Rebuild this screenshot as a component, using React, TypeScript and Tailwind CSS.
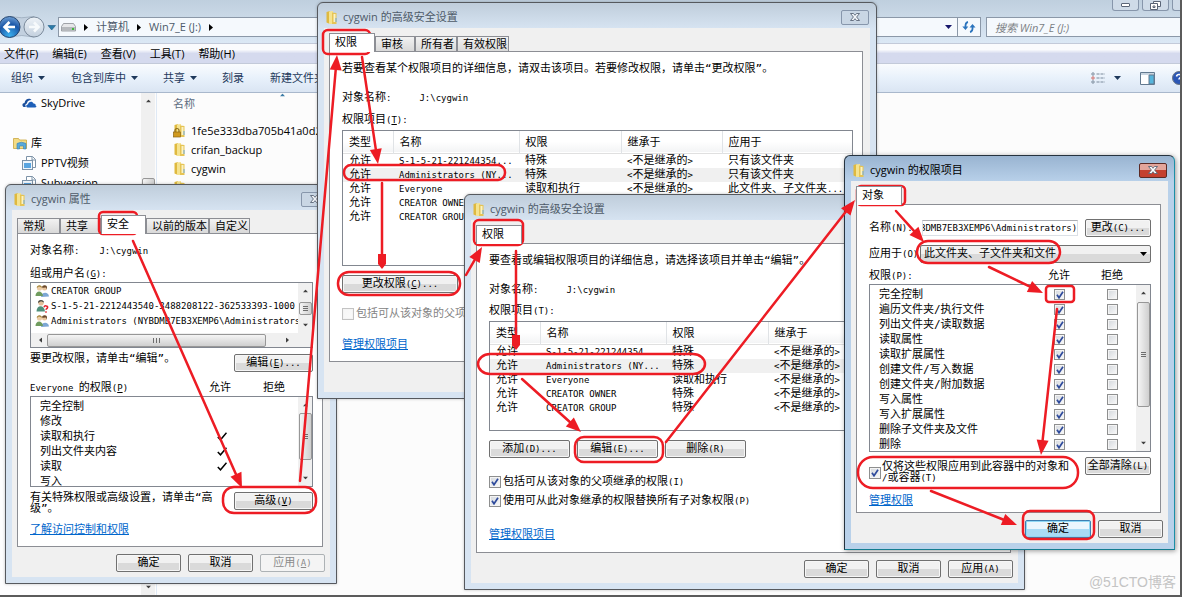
import React from 'react';
import { clsx } from 'clsx';

const UI_FONT = "font-['Open_Sans','Noto_Sans_CJK_SC',sans-serif]";
const DIALOG_FONT = "font-['DejaVu_Sans_Mono','Noto_Sans_CJK_SC',monospace]";
const RED = '#ed1c24';

// Splits a label into CJK and latin runs. "&" marks the accelerator key, as in Win32 resources.
const T = ({ text }: { text: string }) => {
  const runs = text.match(/[\x20-\x7e]+|[^\x20-\x7e]+/g) ?? [];
  return (
    <>
      {runs.map((run, i) => {
        if (run.charCodeAt(0) > 0x7e) return <React.Fragment key={i}>{run}</React.Fragment>;
        const at = run.indexOf('&');
        return (
          <span key={i} className="text-[9px] whitespace-pre">
            {at < 0 ? run : <>{run.slice(0, at)}<u>{run[at + 1]}</u>{run.slice(at + 2)}</>}
          </span>
        );
      })}
    </>
  );
};

/* ---------- icons ---------- */

const FolderIcon = ({ locked = false }: { locked?: boolean }) => (
  <svg width="14" height="15" viewBox="0 0 14 15" className="shrink-0">
    <path d="M1.500 2 5 1v13l-3.500-1.500z" fill="#dfb93f" />
    <path d="M4 1.500 8 1v13H4z" fill="#f5e38f" />
    <path d="M7 2.500 11.500 3v11H7z" fill="#e6c455" />
    <path d="M8.500 4h2v8h-2z" fill="#fbf3c4" />
    <path d="M10.500 8h1v4h-1z" fill="#6fa8d6" />
    {locked && (
      <>
        <path d="M2 9V7.500a2 2 0 0 1 4 0V9" fill="none" stroke="#8a6a1c" strokeWidth="1.200" />
        <rect x="0.500" y="9" width="7" height="5" fill="#d19a1f" stroke="#8a6412" strokeWidth="0.700" />
      </>
    )}
  </svg>
);

const CloudIcon = () => (
  <svg width="15" height="10" viewBox="0 0 15 10" className="shrink-0">
    <path d="M1.500 9C-.5 7.500.5 5 2.500 5 3 1 7.500-.5 9.500 2 6.500 2 5 3.500 5 5.500 3 6 3 8 4 9z" fill="#1b4f9c" />
    <path d="M5.500 9.500C3.500 9 4 6.500 6 6.500c0-3 4.500-4 5.500-1 2 0 2.500 1.500 2 2C15 8 14.500 9.500 13 9.500z" fill="#1d5fb8" />
  </svg>
);

const LibraryIcon = () => (
  <svg width="15" height="13" viewBox="0 0 15 13" className="shrink-0">
    <path d="M.5 1.500h5l1 1.500h7v8.500H.5z" fill="#f3dc86" stroke="#c9a740" strokeWidth="0.800" />
    <path d="M4 12V6.500Q8.500 4 13 6.500V12h-2.500V9h-4v3z" fill="#59aadb" stroke="#3a80b4" strokeWidth="0.600" />
  </svg>
);

const DocLibraryIcon = () => (
  <svg width="14" height="15" viewBox="0 0 14 15" className="shrink-0">
    <path d="M4.500.5h6l3 3v8h-9z" fill="#fff" stroke="#7d93a8" />
    <path d="M10 .5V4h3.500" fill="none" stroke="#7d93a8" />
    <rect x="0.500" y="4.500" width="10" height="9" fill="#eef5fb" stroke="#7d93a8" />
    <rect x="2" y="7" width="7" height="5" fill="#5aa5e0" />
  </svg>
);

const DriveIcon = () => (
  <svg width="15" height="9" viewBox="0 0 15 9" className="shrink-0">
    <path d="M2.500.5h10l2 3v4.500H.5V3.500z" fill="#e6e7e9" stroke="#8b8f94" strokeWidth="0.800" />
    <path d="M1 4h13v4H1z" fill="#b6b9bd" />
    <rect x="11" y="5" width="2" height="2" fill="#3fba3a" />
  </svg>
);

const GroupIcon = () => (
  <svg width="14" height="14" viewBox="0 0 14 14" className="shrink-0">
    <circle cx="9.500" cy="4" r="2.500" fill="#e8c49c" />
    <path d="M7 3.500C7 1 12 0 12 3.500v2l-1-2-3 .2z" fill="#6a4a2c" />
    <path d="M6 13c0-5 7.500-6 8-.5z" fill="#7da7d4" />
    <circle cx="4.500" cy="4" r="2.600" fill="#edcda6" />
    <path d="M1.800 4C1.500.5 7 .3 7 3.800L4 2.600z" fill="#a5883f" />
    <path d="M.5 12c0-6 7-6 7.500 0z" fill="#6f9c5e" />
  </svg>
);

const UnknownUserIcon = () => (
  <svg width="14" height="14" viewBox="0 0 14 14" className="shrink-0">
    <circle cx="6" cy="3.800" r="2.800" fill="#e3c09a" />
    <path d="M3 4C2.500 0 9 0 9 3.500L6 2.300z" fill="#4c4c48" />
    <path d="M1.500 12.500c0-7 8-7 8.500 0z" fill="#4f8f7a" />
    <path d="M9 8.200c.5-2 4-1.600 3.600.3-.2 1-1.500 1.200-1.600 2.300M11 12.200v1.500" fill="none" stroke="#e3202a" strokeWidth="1.500" />
  </svg>
);

const Down = ({ className = 'text-[#1e395b]' }: { className?: string }) => (
  <svg width="7" height="4" viewBox="0 0 7 4" className={clsx('shrink-0', className)}>
    <path d="M0 0h7L3.500 4z" fill="currentColor" />
  </svg>
);

const CrumbArrow = () => (
  <svg width="4" height="7" viewBox="0 0 4 7" className="mx-[8px] shrink-0">
    <path d="M0 0v7l4-3.500z" fill="#000" />
  </svg>
);

const CloseGlyph = ({ fill }: { fill: string }) => (
  <svg width="10" height="8" viewBox="0 0 10 8">
    <path d="M.5.5h3L5 2.300 6.500.5h3L6.600 4l2.900 3.500h-3L5 5.700 3.500 7.500h-3L3.400 4z" fill={fill} stroke="#5a6577" strokeWidth="0.900" />
  </svg>
);

/* ---------- controls ---------- */

interface BtnProps {
  text: string;
  className?: string;
  disabled?: boolean;
  primary?: boolean;
}

const Btn = ({ text, className, disabled, primary }: BtnProps) => (
  <button
    type="button"
    disabled={disabled}
    className={clsx(
      'flex h-[18px] items-center justify-center rounded-[2px] border whitespace-nowrap',
      disabled && 'border-[#adb2b5] bg-[#f4f4f4] text-[#8a8a8a]',
      primary && 'border-[#3c7fb1] bg-linear-to-b from-[#eaf6fd] from-50% to-[#a9dbf5] to-50% shadow-[inset_0_0_0_1px_#8fd8f5]',
      !disabled && !primary && 'border-[#707070] bg-linear-to-b from-[#f1f1f1] from-50% to-[#dadada] to-50% shadow-[inset_0_0_0_1px_#f6f6f6]',
      className,
    )}
  >
    <span><T text={text} /></span>
  </button>
);

interface CheckProps {
  checked?: boolean;
  disabled?: boolean;
  small?: boolean;
  id?: string;
  label?: string;
}

const Check = ({ checked, disabled, small, id, label }: CheckProps) => (
  <span className="grid shrink-0 place-items-center">
    <input
      type="checkbox"
      id={id}
      aria-label={label}
      defaultChecked={checked}
      disabled={disabled}
      className={clsx(
        'peer col-start-1 row-start-1 appearance-none border border-[#8e8f8f] bg-linear-to-br from-[#d3d7dc] to-[#fafafa] shadow-[inset_0_0_0_1px_#f4f4f4] disabled:border-[#c3c3c3] disabled:from-[#f6f6f6]',
        small ? 'size-[11px]' : 'size-[12px]',
      )}
    />
    <svg width="8" height="8" viewBox="0 0 8 8" className="pointer-events-none invisible col-start-1 row-start-1 peer-checked:visible">
      <path d="M1 3.800 3 6.800 7 .8" fill="none" stroke="#2f4b9c" strokeWidth="1.700" />
    </svg>
  </span>
);

const VScroll = ({ before, thumb }: { before: string; thumb: string }) => (
  <div className="flex w-[14px] shrink-0 flex-col items-center bg-[#f0f0f0] py-[6px]">
    <Down className="rotate-180 scale-75 text-[#404040]" />
    <div className={before} />
    <div className={clsx('flex w-[13px] flex-col items-center justify-center gap-[1px] rounded-[2px] border border-[#979797] bg-linear-to-r from-[#f5f5f5] to-[#cfcfcf]', thumb)}>
      <i className="h-px w-[5px] bg-[#6d6d6d]" />
      <i className="h-px w-[5px] bg-[#6d6d6d]" />
      <i className="h-px w-[5px] bg-[#6d6d6d]" />
    </div>
    <div className="flex-1" />
    <Down className="scale-75 text-[#404040]" />
  </div>
);

interface Tab {
  name: string;
  width: string;
}

interface DialogProps {
  title: string;
  place: string;
  tabs: Tab[];
  current: string;
  active?: boolean;
  footer?: React.ReactNode;
  children: React.ReactNode;
}

const Dialog = ({ title, place, tabs, current, active, footer, children }: DialogProps) => (
  <section
    className={clsx(
      'absolute flex flex-col rounded-t-[6px] border px-[6px] pb-[6px] text-[11px] leading-[16px] text-black',
      DIALOG_FONT,
      active
        ? 'border-[#26333f] border-r-[#1b8fa6] border-b-[#127c8f] bg-[#b9d1ea] bg-linear-to-b from-[#99b4d1] to-[#b9d1ea] to-[26px] shadow-[1px_1px_5px_rgba(0,0,0,0.4)]'
        : 'border-[#56595e] bg-[#d7e4f2] bg-linear-to-b from-[#bfcddb] to-[#d7e4f2] to-[26px] shadow-[0_0_3px_rgba(0,0,0,0.25)]',
      place,
    )}
  >
    <header className={clsx('flex h-[25px] shrink-0 items-center gap-[4px] pt-[3px] pl-px', UI_FONT, active ? 'text-black' : 'text-[#4e5a68]')}>
      <FolderIcon />
      <h2 className="flex-1 whitespace-nowrap">{title}</h2>
      <button
        type="button"
        aria-label="关闭"
        className={clsx(
          'mr-px flex h-[15px] w-[28px] items-center justify-center rounded-[2px] border',
          active ? 'border-[#5c2a25] bg-linear-to-b from-[#e3a59b] from-45% to-[#c4402f] to-50%' : 'border-[#8796ab] bg-[#c9d6e4]',
        )}
      >
        <CloseGlyph fill={active ? '#fff' : '#f3f6fa'} />
      </button>
    </header>
    <div className="flex min-h-0 flex-1 flex-col bg-[#f0f0f0] px-[5px] pt-[5px]">
      <div className="flex h-[18px] shrink-0 items-end" role="tablist">
        {tabs.map((tab) => (
          <button
            key={tab.name}
            type="button"
            role="tab"
            aria-selected={tab.name === current}
            className={clsx(
              'border border-b-0 border-[#8c8e94] pl-[5px] text-left whitespace-nowrap',
              tab.name === current ? 'z-10 -mb-px h-[19px] bg-white' : 'h-[15px] bg-linear-to-b from-[#f2f2f2] to-[#d9d9d9]',
              tab.width,
            )}
          >
            {tab.name}
          </button>
        ))}
      </div>
      <div className="mr-[2px] flex min-h-0 flex-1 flex-col border border-[#8c8e94] bg-white pr-[9px] pl-[12px]">{children}</div>
      <div className="flex h-[30px] shrink-0 justify-end gap-[7px] pt-[7px]">{footer}</div>
    </div>
  </section>
);

const DialogLink = ({ text, className }: { text: string; className: string }) => (
  <a href="#" className={clsx('self-start text-[#0066cc] underline', className)}>{text}</a>
);

/* ---------- data ---------- */

const ENTRIES = [
  ['允许', 'S-1-5-21-221244354...', '特殊', '<不是继承的>', '只有该文件夹'],
  ['允许', 'Administrators (NY...', '特殊', '<不是继承的>', '只有该文件夹'],
  ['允许', 'Everyone', '读取和执行', '<不是继承的>', '此文件夹、子文件夹...'],
  ['允许', 'CREATOR OWNER', '特殊', '<不是继承的>', '只有子文件夹和文件'],
  ['允许', 'CREATOR GROUP', '特殊', '<不是继承的>', '只有子文件夹和文件'],
];

const BASIC_RIGHTS = [
  { name: '完全控制', allow: false },
  { name: '修改', allow: false },
  { name: '读取和执行', allow: true },
  { name: '列出文件夹内容', allow: true },
  { name: '读取', allow: true },
  { name: '写入', allow: false },
];

const SPECIAL_RIGHTS = [
  '完全控制',
  '遍历文件夹/执行文件',
  '列出文件夹/读取数据',
  '读取属性',
  '读取扩展属性',
  '创建文件/写入数据',
  '创建文件夹/附加数据',
  '写入属性',
  '写入扩展属性',
  '删除子文件夹及文件',
  '删除',
];

const EntryTable = ({ height }: { height: string }) => (
  <div className={clsx('shrink-0 overflow-hidden border border-[#828790] bg-white', height)}>
    <table className="w-full table-fixed border-collapse text-left whitespace-nowrap">
      <thead>
        <tr className="h-[22px] border-b border-[#e0e0e0] bg-linear-to-b from-white from-50% to-[#f3f4f5]">
          <th className="w-[50px] border-r border-[#e0e3e6] p-0 pt-[2px] pl-[6px] font-normal">类型</th>
          <th className="w-[126px] border-r border-[#e0e3e6] p-0 pt-[2px] pl-[6px] font-normal">名称</th>
          <th className="w-[102px] border-r border-[#e0e3e6] p-0 pt-[2px] pl-[6px] font-normal">权限</th>
          <th className="w-[101px] border-r border-[#e0e3e6] p-0 pt-[2px] pl-[6px] font-normal">继承于</th>
          <th className="p-0 pt-[2px] pl-[6px] font-normal">应用于</th>
        </tr>
      </thead>
      <tbody>
        {ENTRIES.map((row, r) => (
          <tr key={row[1]} className={clsx('h-[14px] leading-[14px]', r === 1 && 'bg-[#f0f0f0]')}>
            {row.map((cell, c) => (
              <td key={c} className="overflow-hidden p-0 pl-[6px]"><T text={cell} /></td>
            ))}
          </tr>
        ))}
      </tbody>
    </table>
  </div>
);

/* ---------- explorer ---------- */

const Explorer = () => (
  <main className={clsx('mr-[2px] mb-[2px] flex min-h-0 flex-1 flex-col border-r-2 border-b-2 border-[#5b5b5b] bg-[#fcfcfc] text-[11px] leading-[16px]', UI_FONT)}>
    <div className="flex h-[43px] shrink-0 flex-col bg-linear-to-b from-[#bfcfde] to-[#dbe8f5]">
      <div className="flex h-[17px] justify-end gap-[3px]">
        <button type="button" aria-label="最小化" className="flex h-[11px] w-[27px] items-center justify-center rounded-b-[3px] border border-t-0 border-[#8796ab] bg-[#cfdbe8]">
          <i className="h-[4px] w-[9px] rounded-[1px] border border-[#5a6577] bg-white" />
        </button>
        <button type="button" aria-label="还原" className="flex h-[11px] w-[27px] items-center justify-center rounded-b-[3px] border border-t-0 border-[#8796ab] bg-[#cfdbe8]">
          <svg width="11" height="9" viewBox="0 0 11 9" fill="#fff" stroke="#5a6577">
            <path d="M3.500.5h7v5h-7z" />
            <path d="M.5 2.500h7v6h-7zM3 5h2v1.500H3z" />
          </svg>
        </button>
        <button type="button" aria-label="关闭" className="h-[11px] w-[8px] rounded-bl-[3px] border border-t-0 border-r-0 border-[#8796ab] bg-[#cfdbe8]" />
      </div>
      <div className="flex h-[20px] items-center">
        <svg width="58" height="24" viewBox="0 0 58 24" className="shrink-0">
          <defs>
            <radialGradient id="back" cx="0.500" cy="0.900" r="0.900">
              <stop offset="0" stopColor="#39b0ef" />
              <stop offset="0.600" stopColor="#1b58a8" />
              <stop offset="1" stopColor="#6f9fd4" />
            </radialGradient>
            <linearGradient id="fwd" x1="0" y1="0" x2="0" y2="1">
              <stop offset="0" stopColor="#eef3f8" />
              <stop offset="1" stopColor="#c3d0de" />
            </linearGradient>
          </defs>
          <path d="M9 1.500Q22 4 34 1.500V22Q22 19 9 22z" fill="#c2d0df" stroke="#94a3b4" strokeWidth="0.700" />
          <circle cx="9.500" cy="12" r="10.500" fill="url(#back)" stroke="#24456f" />
          <path d="M15 12H5M9.500 7 4.500 12l5 5" fill="none" stroke="#fff" strokeWidth="2.600" />
          <circle cx="34" cy="12" r="10" fill="url(#fwd)" stroke="#7c8b9c" />
          <path d="M29 12h9M34 7.500l4.500 4.500-4.500 4.500" fill="none" stroke="#f7fafc" strokeWidth="2.600" />
          <path d="M48 10.500h7.500L51.700 15z" fill="#2b7ba8" stroke="#1f5c85" strokeWidth="0.600" />
        </svg>
        <nav className="flex h-[20px] flex-1 items-center border border-[#8b98a8] bg-[#f5f9fd] pl-[2px] text-[#4d5b6b]">
          <DriveIcon />
          <CrumbArrow />
          <a href="#">计算机</a>
          <CrumbArrow />
          <a href="#">Win7_E (J:)</a>
          <CrumbArrow />
          <span className="flex-1" />
          <Down className="mr-[5px] text-[#16166b]" />
        </nav>
        <button type="button" aria-label="刷新" className="flex h-[20px] w-[23px] items-center justify-center border border-l-0 border-[#8b98a8] bg-[#f5f9fd]">
          <svg width="14" height="12" viewBox="0 0 14 12" fill="none" stroke="#2b74bd" strokeWidth="1.800">
            <path d="M6 1Q3 1.500 3.500 7M8 11Q11 10.500 10.500 5.500" />
            <path d="M.3 5.500h6L3.500 9zM7.500 6.500h6L10.500 3z" fill="#2b74bd" stroke="none" />
          </svg>
        </button>
        <input
          type="search"
          aria-label="搜索"
          placeholder="搜索 Win7_E (J:)"
          className="ml-[5px] h-[20px] w-[194px] border border-r-0 border-[#8b98a8] bg-[#f5f9fd] pl-[8px] italic placeholder:text-[#7b7f84]"
        />
      </div>
    </div>

    <div className="flex h-[21px] shrink-0 items-center gap-[14px] border-y border-[#c3cad9] bg-linear-to-b from-[#fafbfd] from-30% to-[#d5daee] to-50% pl-[4px]">
      {['文件(F)', '编辑(E)', '查看(V)', '工具(T)', '帮助(H)'].map((item) => (
        <button key={item} type="button" className="whitespace-nowrap">{item}</button>
      ))}
    </div>

    <div className="flex h-[29px] shrink-0 items-center border-b border-[#a9b8cc] bg-linear-to-b from-[#fafcfe] via-[#e8f1fb] via-50% to-[#dae5f3] pl-[11px] text-[#1e395b]">
      <button type="button" className="flex w-[60px] items-center gap-[5px] whitespace-nowrap">组织<Down /></button>
      <button type="button" className="flex w-[92px] items-center gap-[5px] whitespace-nowrap">包含到库中<Down /></button>
      <button type="button" className="flex w-[59px] items-center gap-[5px] whitespace-nowrap">共享<Down /></button>
      <button type="button" className="w-[48px] text-left whitespace-nowrap">刻录</button>
      <button type="button" className="whitespace-nowrap">新建文件夹</button>
      <span className="flex-1" />
      <button type="button" aria-label="视图" className="flex items-center gap-[9px]">
        <svg width="14" height="12" viewBox="0 0 14 12" fill="none" stroke="#7a8a9b">
          <path d="M5.500 2H14M5.500 6H14M5.500 10H14" strokeDasharray="3 1" />
          <circle cx="2" cy="2" r="1.200" />
          <circle cx="2" cy="6" r="1.200" stroke="#d0655f" />
          <circle cx="2" cy="10" r="1.200" />
        </svg>
        <Down />
      </button>
      <button type="button" aria-label="预览窗格" className="mr-[17px] ml-[19px]">
        <svg width="15" height="13" viewBox="0 0 15 13">
          <path d="M.5.5h14v12H.5z" fill="#fff" stroke="#62798f" />
          <path d="M1 1h13v2H1z" fill="#c9d5e0" />
          <path d="M9 3h5v9H9z" fill="#55b4dc" stroke="#62798f" />
        </svg>
      </button>
      <button type="button" aria-label="帮助" className="w-[8px] overflow-hidden">
        <svg width="14" height="14" viewBox="0 0 14 14" className="max-w-none">
          <circle cx="7" cy="7" r="6.500" fill="#2c57b5" stroke="#6b7684" />
          <path d="M4.500 5.500c.5-3 5-2.500 4.500 0-.3 1.500-2 1.500-2 3" fill="none" stroke="#fff" strokeWidth="1.600" />
        </svg>
      </button>
    </div>

    <div className="flex min-h-0 flex-1">
      <aside className="flex w-[141px] shrink-0 flex-col bg-[#fdfdfe]">
        <a href="#" className="flex h-[20px] items-center gap-[4px] pl-[22px]"><CloudIcon />SkyDrive</a>
        <a href="#" className="mt-[20px] flex h-[20px] items-center gap-[3px] pl-[13px]"><LibraryIcon />库</a>
        <a href="#" className="flex h-[20px] items-center gap-[5px] pl-[22px]"><DocLibraryIcon />PPTV视频</a>
        <a href="#" className="flex h-[20px] items-center gap-[5px] pl-[22px]"><DocLibraryIcon />Subversion</a>
      </aside>
      <VScroll before="h-[75px]" thumb="h-[60px]" />
      <div className="ml-[1px] flex-1 border-l border-[#dfe9f5] pl-[16px]">
        <div className="flex h-[28px] items-start text-[#5b6b80]">
          <span className="w-[106px] pt-[3px]">名称</span>
          <Down className="rotate-180 scale-75 text-[#3b7ba6]" />
        </div>
        <ul>
          {['1fe5e333dba705b41a0d2', 'crifan_backup', 'cygwin', 'download'].map((name, i) => (
            <li key={name} className="flex h-[19px] items-center gap-[4px] whitespace-nowrap">
              <FolderIcon locked={i === 0} />
              {name}
            </li>
          ))}
        </ul>
      </div>
    </div>
  </main>
);

/* ---------- dialogs ---------- */

const PropertiesDialog = () => (
  <Dialog
    title="cygwin 属性"
    place="left-[5px] top-[184px] h-[400px] w-[332px]"
    current="安全"
    tabs={[
      { name: '常规', width: 'w-[43px]' },
      { name: '共享', width: 'w-[41px]' },
      { name: '安全', width: 'w-[45px]' },
      { name: '以前的版本', width: 'w-[63px]' },
      { name: '自定义', width: 'w-[41px]' },
    ]}
    footer={
      <>
        <Btn text="确定" className="w-[65px]" />
        <Btn text="取消" className="w-[65px]" />
        <Btn text="应用(&A)" className="w-[65px]" disabled />
      </>
    }
  >
    <div className="mt-[9px] flex h-[16px] gap-[20px]"><span><T text="对象名称:" /></span><span><T text="J:\cygwin" /></span></div>
    <div className="mt-[7px] h-[16px]"><T text="组或用户名(&G):" /></div>
    <div className="flex h-[66px] shrink-0 flex-col border border-[#828790]">
      <div className="flex h-[50px] shrink-0">
        <ul className="min-w-0 flex-1 overflow-hidden pl-[4px] whitespace-nowrap">
          <li className="flex h-[15px] items-center gap-[2px]"><GroupIcon /><T text="CREATOR GROUP" /></li>
          <li className="flex h-[15px] items-center gap-[2px]"><UnknownUserIcon /><T text="S-1-5-21-2212443540-3488208122-362533393-1000" /></li>
          <li className="flex h-[15px] items-center gap-[2px]"><GroupIcon /><T text="Administrators (NYBDMB7EB3XEMP6\Administrators" /></li>
        </ul>
        <VScroll before="h-[9px]" thumb="h-[13px]" />
      </div>
      <div className="flex h-[14px] items-center bg-[#f0f0f0] px-[6px]">
        <Down className="rotate-90 scale-75 text-[#404040]" />
        <div className="ml-[3px] flex h-[13px] w-[219px] items-center justify-center gap-[2px] rounded-[2px] border border-[#979797] bg-linear-to-b from-[#f5f5f5] to-[#cfcfcf]">
          <i className="h-[5px] w-px bg-[#6d6d6d]" />
          <i className="h-[5px] w-px bg-[#6d6d6d]" />
          <i className="h-[5px] w-px bg-[#6d6d6d]" />
        </div>
        <Down className="ml-[18px] -rotate-90 scale-75 text-[#404040]" />
      </div>
    </div>
    <div className="mt-[3px] flex h-[22px] items-start justify-between">
      <span><T text="要更改权限，请单击“编辑”。" /></span>
      <Btn text="编辑(&E)..." className="mt-[3px] w-[79px]" />
    </div>
    <div className="mt-[7px] flex h-[16px]">
      <span className="w-[179px]"><T text="Everyone 的权限(&P)" /></span>
      <span className="w-[54px]">允许</span>
      <span>拒绝</span>
    </div>
    <div className="flex h-[91px] shrink-0 overflow-hidden border border-[#828790]">
      <ul className="flex-1 pt-[2px] pl-[9px]">
        {BASIC_RIGHTS.map((right) => (
          <li key={right.name} className="flex h-[15px] items-center">
            <span className="w-[177px]">{right.name}</span>
            {right.allow && (
              <svg width="10" height="9" viewBox="0 0 10 9">
                <path d="M.8 5 3.500 7.800 9.500.8" fill="none" stroke="#000" strokeWidth="1.500" />
              </svg>
            )}
          </li>
        ))}
      </ul>
      <VScroll before="h-[6px]" thumb="h-[47px]" />
    </div>
    <div className="mt-[5px] flex h-[23px] items-start justify-between">
      <p className="w-[185px] leading-[11px]">有关特殊权限或高级设置，请单击“高级”。</p>
      <Btn text="高级(&V)" className="w-[79px]" />
    </div>
    <DialogLink text="了解访问控制和权限" className="mt-[7px]" />
  </Dialog>
);

const AdvancedDialog = () => (
  <Dialog
    title="cygwin 的高级安全设置"
    place="left-[317px] top-[2px] h-[397px] w-[560px]"
    current="权限"
    tabs={[
      { name: '权限', width: 'w-[46px]' },
      { name: '审核', width: 'w-[40px]' },
      { name: '所有者', width: 'w-[42px]' },
      { name: '有效权限', width: 'w-[52px]' },
    ]}
  >
    <p className="mt-[9px] h-[16px] whitespace-nowrap">若要查看某个权限项目的详细信息，请双击该项目。若要修改权限，请单击“更改权限”。</p>
    <div className="mt-[13px] flex h-[16px] gap-[28px]"><span><T text="对象名称:" /></span><span><T text="J:\cygwin" /></span></div>
    <div className="mt-[6px] mb-[2px] h-[16px]"><T text="权限项目(&T):" /></div>
    <EntryTable height="h-[136px]" />
    <Btn text="更改权限(&C)..." className="mt-[9px] w-[116px]" />
    <label className="mt-[13px] flex h-[16px] items-center gap-[2px] whitespace-nowrap text-[#838383]">
      <Check disabled />
      <span><T text="包括可从该对象的父项继承的权限(&I)" /></span>
    </label>
    <DialogLink text="管理权限项目" className="mt-[15px]" />
  </Dialog>
);

const EditAdvancedDialog = () => (
  <Dialog
    title="cygwin 的高级安全设置"
    place="left-[464px] top-[194px] h-[396px] w-[561px]"
    current="权限"
    tabs={[{ name: '权限', width: 'w-[46px]' }]}
    footer={
      <>
        <Btn text="确定" className="w-[65px]" />
        <Btn text="取消" className="w-[65px]" />
        <Btn text="应用(A)" className="w-[65px]" />
      </>
    }
  >
    <p className="mt-[9px] h-[16px] whitespace-nowrap">要查看或编辑权限项目的详细信息，请选择该项目并单击“编辑”。</p>
    <div className="mt-[13px] flex h-[16px] gap-[28px]"><span><T text="对象名称:" /></span><span><T text="J:\cygwin" /></span></div>
    <div className="mt-[5px] mb-[2px] h-[16px]"><T text="权限项目(T):" /></div>
    <EntryTable height="h-[110px]" />
    <div className="mt-[9px] flex gap-[7px]">
      <Btn text="添加(D)..." className="w-[81px]" />
      <Btn text="编辑(E)..." className="w-[81px]" />
      <Btn text="删除(R)" className="w-[81px]" />
    </div>
    <label className="mt-[16px] flex h-[16px] items-center gap-[2px]">
      <Check checked />
      <span><T text="包括可从该对象的父项继承的权限(I)" /></span>
    </label>
    <label className="mt-[3px] flex h-[16px] items-center gap-[2px]">
      <Check checked />
      <span><T text="使用可从此对象继承的权限替换所有子对象权限(P)" /></span>
    </label>
    <DialogLink text="管理权限项目" className="mt-[18px]" />
  </Dialog>
);

const EntryDialog = () => (
  <Dialog
    active
    title="cygwin 的权限项目"
    place="left-[844px] top-[155px] h-[395px] w-[331px]"
    current="对象"
    tabs={[{ name: '对象', width: 'w-[46px]' }]}
    footer={
      <>
        <Btn text="确定" className="w-[66px]" primary />
        <Btn text="取消" className="w-[65px]" />
      </>
    }
  >
    <div className="mt-[14px] flex h-[18px] items-center">
      <label htmlFor="name" className="w-[53px]"><T text="名称(N):" /></label>
      <input id="name" readOnly defaultValue="BDMB7EB3XEMP6\Administrators)" className="h-[16px] min-w-0 flex-1 border border-[#dbe0e6] border-t-[#abadb3] indent-[-3px] text-[9px]" />
      <Btn text="更改(C)..." className="ml-[7px] w-[66px]" />
    </div>
    <div className="mt-[8px] flex h-[18px] items-center">
      <label htmlFor="scope" className="w-[51px] whitespace-nowrap"><T text="应用于(O):" /></label>
      <div className="grid flex-1 items-center">
        <select id="scope" className="col-start-1 row-start-1 h-[18px] appearance-none rounded-[2px] border border-[#707070] bg-linear-to-b from-[#f1f1f1] from-50% to-[#dadada] to-50% pl-[3px]">
          <option>此文件夹、子文件夹和文件</option>
        </select>
        <Down className="pointer-events-none col-start-1 row-start-1 mr-[4px] justify-self-end text-black" />
      </div>
    </div>
    <div className="mt-[5px] flex h-[16px]">
      <span className="w-[179px]"><T text="权限(P):" /></span>
      <span className="w-[53px]">允许</span>
      <span>拒绝</span>
    </div>
    <div className="flex h-[168px] shrink-0 overflow-hidden border border-[#828790]">
      <ul className="flex-1 pt-[2px] pl-[9px]">
        {SPECIAL_RIGHTS.map((right) => (
          <li key={right} className="flex h-[15px] items-center">
            <span className="w-[175px]">{right}</span>
            <Check small checked label={`允许 ${right}`} />
            <span className="w-[42px]" />
            <Check small label={`拒绝 ${right}`} />
          </li>
        ))}
      </ul>
      <VScroll before="h-[7px]" thumb="h-[105px]" />
    </div>
    <div className="mt-[5px] flex h-[28px] items-start justify-between">
      <div className="flex items-center gap-px pt-[4px]">
        <Check checked id="only" />
        <label htmlFor="only" className="w-[197px] leading-[11px]"><T text="仅将这些权限应用到此容器中的对象和" /><br /><T text="/或容器(T)" /></label>
      </div>
      <Btn text="全部清除(L)" className="w-[66px] shrink-0" />
    </div>
    <DialogLink text="管理权限" className="mt-[8px]" />
  </Dialog>
);

/* ---------- red marker layer ---------- */

// x, y, width, height, corner radius
const BOXES = [
  [99, 212, 38, 22, 4],
  [223, 487, 93, 26, 11],
  [323, 30, 47, 24, 5],
  [344, 165, 161, 15, 7],
  [338, 272, 122, 23, 11],
  [474, 220, 49, 25, 5],
  [478, 354, 227, 20, 12],
  [575, 437, 88, 25, 9],
  [857, 186, 48, 19, 4],
  [917, 241, 143, 22, 11],
  [1046, 286, 28, 16, 3],
  [858, 457, 220, 31, 15],
  [1023, 511, 71, 28, 7],
];

// x1, y1, x2, y2, half width of the head
const ARROWS = [
  [133, 241, 242, 488, 6],
  [300, 481, 337, 55, 6],
  [362, 57, 378, 164, 6],
  [382, 183, 382, 269, 4],
  [466, 275, 482, 247, 6],
  [516, 251, 516, 350, 4],
  [522, 379, 581, 432, 6],
  [666, 442, 855, 200, 6],
  [896, 211, 924, 242, 6],
  [989, 267, 1043, 293, 6],
  [1057, 309, 1041, 455, 6],
  [931, 491, 1017, 525, 6],
];

const Markers = () => (
  <svg className="pointer-events-none absolute inset-0 size-full" fill="none" stroke={RED} strokeLinecap="round">
    {BOXES.map(([x, y, w, h, r]) => (
      <rect key={`${x}-${y}`} x={x} y={y} width={w} height={h} rx={r} strokeWidth="2.500" />
    ))}
    {ARROWS.map(([x1, y1, x2, y2, half]) => {
      const len = Math.hypot(x2 - x1, y2 - y1);
      const ux = (x2 - x1) / len;
      const uy = (y2 - y1) / len;
      const bx = x2 - ux * 15;
      const by = y2 - uy * 15;
      // narrow heads keep their width up to just before the tip
      const nx = half < 5 ? x2 - ux * 5 : bx;
      const ny = half < 5 ? y2 - uy * 5 : by;
      const points = [
        [x2, y2],
        [nx - uy * half, ny + ux * half],
        [bx - uy * half, by + ux * half],
        [bx + uy * half, by - ux * half],
        [nx + uy * half, ny - ux * half],
      ];
      return (
        <g key={`${x1}-${y1}`}>
          <line x1={x1} y1={y1} x2={bx} y2={by} strokeWidth="2.500" />
          <polygon points={points.join(' ')} fill={RED} stroke="none" />
        </g>
      );
    })}
  </svg>
);

export default function App() {
  return (
    <div className="relative flex h-screen w-full flex-col overflow-hidden bg-white">
      <Explorer />
      <PropertiesDialog />
      <AdvancedDialog />
      <EditAdvancedDialog />
      <EntryDialog />
      <Markers />
      <span className="absolute right-[8px] bottom-[6px] font-['Liberation_Sans','Noto_Sans_CJK_SC',sans-serif] text-[14px] text-[#c4c4c4]">@51CTO博客</span>
    </div>
  );
}
